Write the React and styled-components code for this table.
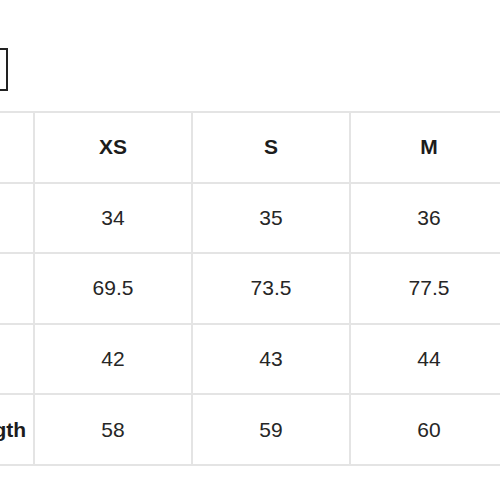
import React from 'react';
import styled, { createGlobalStyle } from 'styled-components';

const GlobalStyle = createGlobalStyle`
  html, body {
    margin: 0;
    padding: 0;
    background: #ffffff;
    overflow: hidden;
  }
  body {
    font-family: "Liberation Sans", Arial, sans-serif;
  }
`;

const Page = styled.div`
  width: 500px;
  height: 500px;
  overflow: hidden;
  padding-top: 48px;
  box-sizing: border-box;
`;

const SizeToggle = styled.div`
  width: 42px;
  height: 43px;
  margin-left: -34px;
  border: 2px solid #222;
  box-sizing: border-box;
  background: #fff;
`;

const Chart = styled.div`
  display: grid;
  grid-template-columns: repeat(5, 156px);
  grid-auto-rows: 68.6px;
  gap: 2px;
  padding: 2px;
  width: max-content;
  margin: 20px 0 0 -125px;
  background: #e4e4e4;
`;

const Cell = styled.div`
  display: flex;
  align-items: center;
  justify-content: center;
  background: #ffffff;
  font-size: 21px;
  white-space: nowrap;
  font-weight: ${(props) => (props.head ? 700 : 400)};
  color: ${(props) => (props.head ? '#1c1c1c' : '#262626')};
`;

const sizes = ['XS', 'S', 'M', 'L'];

const rows = [
  { label: 'Neck', values: ['34', '35', '36', '37'] },
  { label: 'Chest', values: ['69.5', '73.5', '77.5', '81.5'] },
  { label: 'Waist', values: ['42', '43', '44', '45'] },
  { label: 'Sleeve Length', values: ['58', '59', '60', '61'] },
];

export default function App() {
  return (
    <>
      <GlobalStyle />
      <Page>
        <SizeToggle />
        <Chart>
          <Cell head>Size</Cell>
          {sizes.map((s) => (
            <Cell head key={s}>
              {s}
            </Cell>
          ))}
          {rows.map((row) => (
            <React.Fragment key={row.label}>
              <Cell head>{row.label}</Cell>
              {row.values.map((v, i) => (
                <Cell key={i}>{v}</Cell>
              ))}
            </React.Fragment>
          ))}
        </Chart>
      </Page>
    </>
  );
}
